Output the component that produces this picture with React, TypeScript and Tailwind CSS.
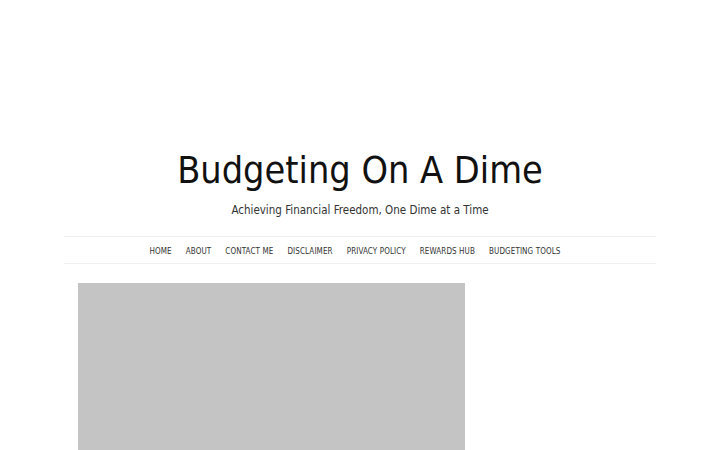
const navItems = [
  "Home",
  "About",
  "Contact Me",
  "Disclaimer",
  "Privacy Policy",
  "Rewards Hub",
  "Budgeting Tools",
];

export default function App() {
  return (
    <div
      className="h-[450px] overflow-hidden bg-white text-[#111]"
      style={{ fontFamily: "'DejaVu Sans Condensed', 'DejaVu Sans', sans-serif" }}
    >
      <header className="pt-[147px] text-center">
        <h1 className="text-[37.5px] leading-[46px] text-[#111]">Budgeting On A Dime</h1>
        <p className="mt-[9px] text-[11.5px] leading-[16px] text-[#333]">
          Achieving Financial Freedom, One Dime at a Time
        </p>
      </header>

      <nav className="mx-auto mt-[18px] w-[592px] border-y border-[#f0f0f0]">
        <ul className="flex h-[26px] items-center justify-center gap-[14px] pb-[2px] pr-[10px]">
          {navItems.map((item) => (
            <li key={item}>
              <a href="#" className="text-[8px] uppercase tracking-[0.1px] text-[#333]">
                {item}
              </a>
            </li>
          ))}
        </ul>
      </nav>

      <main className="mx-auto mt-[19px] flex w-[592px] px-[14px]">
        <div className="h-[300px] w-[387px] bg-[#c4c4c4]" />
      </main>
    </div>
  );
}
